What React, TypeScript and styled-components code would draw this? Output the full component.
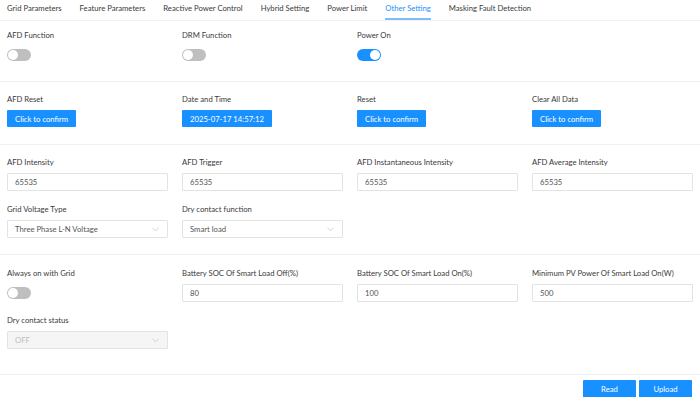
import React, { useState } from 'react';
import styled, { createGlobalStyle } from 'styled-components';

const GlobalStyle = createGlobalStyle`
  html, body {
    margin: 0;
    padding: 0;
    background: #ffffff;
  }
  body {
    font-family: Lato, "Open Sans", "Liberation Sans", sans-serif;
    font-size: 7.7px;
    color: #333333;
  }
`;

const tabs = [
  'Grid Parameters',
  'Feature Parameters',
  'Reactive Power Control',
  'Hybrid Setting',
  'Power Limit',
  'Other Setting',
  'Masking Fault Detection',
];

export default function App() {
  const [active, setActive] = useState('Other Setting');

  return (
    <>
      <GlobalStyle />
      <Page>
        <TabBar>
          {tabs.map((t) => (
            <Tab key={t} $active={t === active} onClick={() => setActive(t)}>
              {t}
            </Tab>
          ))}
        </TabBar>

        <Section $top={8} $bottom={18}>
          <FieldGrid>
            <Field>
              <Label>AFD Function</Label>
              <ControlBox><Toggle $on={false} /></ControlBox>
            </Field>
            <Field>
              <Label>DRM Function</Label>
              <ControlBox><Toggle $on={false} /></ControlBox>
            </Field>
            <Field>
              <Label>Power On</Label>
              <ControlBox><Toggle $on={true} /></ControlBox>
            </Field>
          </FieldGrid>
        </Section>

        <Section $top={11} $bottom={17}>
          <FieldGrid>
            <Field>
              <Label>AFD Reset</Label>
              <ControlBox><PrimaryButton>Click to confirm</PrimaryButton></ControlBox>
            </Field>
            <Field>
              <Label>Date and Time</Label>
              <ControlBox><PrimaryButton>2025-07-17 14:57:12</PrimaryButton></ControlBox>
            </Field>
            <Field>
              <Label>Reset</Label>
              <ControlBox><PrimaryButton>Click to confirm</PrimaryButton></ControlBox>
            </Field>
            <Field>
              <Label>Clear All Data</Label>
              <ControlBox><PrimaryButton>Click to confirm</PrimaryButton></ControlBox>
            </Field>
          </FieldGrid>
        </Section>

        <Section $top={11} $bottom={16}>
          <FieldGrid>
            <Field>
              <Label>AFD Intensity</Label>
              <TextInput defaultValue="65535" />
            </Field>
            <Field>
              <Label>AFD Trigger</Label>
              <TextInput defaultValue="65535" />
            </Field>
            <Field>
              <Label>AFD Instantaneous Intensity</Label>
              <TextInput defaultValue="65535" />
            </Field>
            <Field>
              <Label>AFD Average Intensity</Label>
              <TextInput defaultValue="65535" />
            </Field>
            <Field>
              <Label>Grid Voltage Type</Label>
              <Select>
                <span>Three Phase L-N Voltage</span>
                <Chevron />
              </Select>
            </Field>
            <Field>
              <Label>Dry contact function</Label>
              <Select>
                <span>Smart load</span>
                <Chevron />
              </Select>
            </Field>
          </FieldGrid>
        </Section>

        <Section $top={12} $bottom={25}>
          <FieldGrid>
            <Field>
              <Label>Always on with Grid</Label>
              <ControlBox><Toggle $on={false} /></ControlBox>
            </Field>
            <Field>
              <Label>Battery SOC Of Smart Load Off(%)</Label>
              <TextInput defaultValue="80" />
            </Field>
            <Field>
              <Label>Battery SOC Of Smart Load On(%)</Label>
              <TextInput defaultValue="100" />
            </Field>
            <Field>
              <Label>Minimum PV Power Of Smart Load On(W)</Label>
              <TextInput defaultValue="500" />
            </Field>
            <Field>
              <Label>Dry contact status</Label>
              <Select $disabled>
                <span>OFF</span>
                <Chevron />
              </Select>
            </Field>
          </FieldGrid>
        </Section>

        <Footer>
          <FooterButton>Read</FooterButton>
          <FooterButton>Upload</FooterButton>
        </Footer>
      </Page>
    </>
  );
}

function Chevron() {
  return (
    <ChevronIcon viewBox="0 0 8 5" width="7" height="5">
      <path d="M0.5 0.5 L4 4 L7.5 0.5" fill="none" stroke="#c4c4c4" strokeWidth="0.9" />
    </ChevronIcon>
  );
}

const Page = styled.div`
  width: 700px;
  height: 397px;
  overflow: hidden;
  background: #fff;
`;

const TabBar = styled.div`
  display: flex;
  gap: 18px;
  height: 20px;
  padding: 0 7px;
  border-bottom: 1px solid #f2f2f2;
`;

const Tab = styled.div<{ $active: boolean }>`
  height: 20px;
  line-height: 17px;
  box-sizing: border-box;
  white-space: nowrap;
  cursor: pointer;
  color: ${({ $active }) => ($active ? '#1890ff' : '#3a3a3a')};
  border-bottom: 2px solid ${({ $active }) => ($active ? '#7fbdfa' : 'transparent')};
`;

const Section = styled.div<{ $top: number; $bottom: number }>`
  padding: ${({ $top }) => $top}px 7px ${({ $bottom }) => $bottom}px;
  border-bottom: 1px solid #f0f0f0;
`;

const FieldGrid = styled.div`
  display: grid;
  grid-template-columns: repeat(4, 161px);
  column-gap: 14px;
  row-gap: 12px;
`;

const Field = styled.div`
  display: flex;
  flex-direction: column;
  gap: 5px;
`;

const Label = styled.div`
  height: 12px;
  line-height: 12px;
  white-space: nowrap;
  color: #3a3a3a;
`;

const ControlBox = styled.div`
  height: 17px;
  display: flex;
  align-items: center;
`;

const Toggle = styled.div<{ $on: boolean }>`
  position: relative;
  width: 24px;
  height: 12px;
  border-radius: 6px;
  background: ${({ $on }) => ($on ? '#1890ff' : '#bfbfbf')};

  &::after {
    content: '';
    position: absolute;
    top: 1px;
    left: ${({ $on }) => ($on ? '13px' : '1px')};
    width: 10px;
    height: 10px;
    border-radius: 50%;
    background: #fff;
  }
`;

const PrimaryButton = styled.button`
  height: 17px;
  padding: 0 8px;
  border: none;
  border-radius: 1px;
  background: #1890ff;
  color: #fff;
  font-family: inherit;
  font-size: 7.7px;
  cursor: pointer;
`;

const TextInput = styled.input`
  box-sizing: border-box;
  width: 161px;
  height: 18px;
  padding: 0 7px;
  border: 1px solid #e3e3e3;
  border-radius: 1px;
  font-family: inherit;
  font-size: 7.7px;
  color: #555;
  outline: none;
`;

const Select = styled.div<{ $disabled?: boolean }>`
  box-sizing: border-box;
  width: 161px;
  height: 18px;
  padding: 0 7px;
  display: flex;
  align-items: center;
  justify-content: space-between;
  border: 1px solid #e3e3e3;
  border-radius: 1px;
  background: ${({ $disabled }) => ($disabled ? '#f5f5f5' : '#fff')};
  color: ${({ $disabled }) => ($disabled ? '#bdbdbd' : '#555')};
`;

const ChevronIcon = styled.svg`
  flex-shrink: 0;
  margin-right: 1px;
`;

const Footer = styled.div`
  display: flex;
  justify-content: flex-end;
  gap: 3px;
  padding: 5px 8px 0;
`;

const FooterButton = styled.button`
  width: 53px;
  height: 18px;
  border: none;
  border-radius: 1px;
  background: #1890ff;
  color: #fff;
  font-family: inherit;
  font-size: 7.7px;
  cursor: pointer;
`;
